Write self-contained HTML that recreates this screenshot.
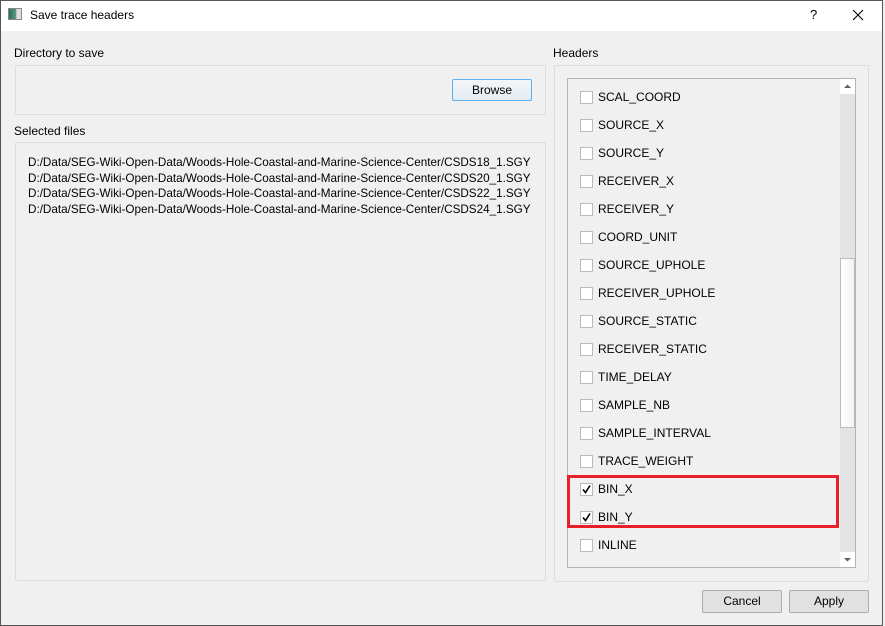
<!DOCTYPE html>
<html><head><style>
*{box-sizing:border-box;margin:0;padding:0}
body{width:885px;height:626px;background:#f0f0f0;font-family:"Liberation Sans",sans-serif;font-size:12px;color:#000;position:relative;overflow:hidden}
.abs{position:absolute}
.title{left:0;top:0;width:883px;height:31px;background:#fff}
.frame{left:0;top:0;width:883px;height:626px;border:1px solid #555;pointer-events:none}
.grp{border:1px solid #dcdcdc;border-radius:2px}
.btn{border:1px solid #adadad;background:#e1e1e1;text-align:center;line-height:21px;border-radius:2px}
.row{position:absolute;left:12px;height:28px;width:260px}
.cb{position:absolute;left:0;top:0;width:13px;height:13px;border:1px solid #bbb;background:#fff}
.lbl{position:absolute;left:18px;top:-1px;font-size:12px;white-space:nowrap}
</style></head><body>
<div class="abs title">
  <div class="abs" style="left:8px;top:8px;width:14px;height:12px;border:1px solid #888;background:linear-gradient(90deg,#2f6b5a 0,#5a9a8a 60%,#ddd 61%)"></div>
  <div class="abs" style="left:30px;top:8px;font-size:12px">Save trace headers</div>
  <div class="abs" style="left:810px;top:7px;font-size:13px">?</div>
  <svg class="abs" style="left:852px;top:9px" width="12" height="12"><path d="M1 1L11 11M11 1L1 11" stroke="#000" stroke-width="1.1"/></svg>
</div>
<div class="abs" style="left:14px;top:46px">Directory to save</div>
<div class="abs grp" style="left:15px;top:65px;width:531px;height:50px"></div>
<div class="abs btn" style="left:452px;top:79px;width:80px;height:22px;border-color:#5fb0f0;background:linear-gradient(#f3f6f9,#e4ecf3);line-height:20px">Browse</div>
<div class="abs" style="left:14px;top:124px">Selected files</div>
<div class="abs grp" style="left:15px;top:142px;width:531px;height:439px"></div>
<div class="abs" style="left:28px;top:155px;line-height:15.6px;font-size:11.7px;white-space:nowrap">D:/Data/SEG-Wiki-Open-Data/Woods-Hole-Coastal-and-Marine-Science-Center/CSDS18_1.SGY<br>D:/Data/SEG-Wiki-Open-Data/Woods-Hole-Coastal-and-Marine-Science-Center/CSDS20_1.SGY<br>D:/Data/SEG-Wiki-Open-Data/Woods-Hole-Coastal-and-Marine-Science-Center/CSDS22_1.SGY<br>D:/Data/SEG-Wiki-Open-Data/Woods-Hole-Coastal-and-Marine-Science-Center/CSDS24_1.SGY</div>
<div class="abs" style="left:553px;top:46px">Headers</div>
<div class="abs grp" style="left:554px;top:65px;width:315px;height:517px"></div>
<div class="abs" style="left:567px;top:78px;width:289px;height:490px;border:1px solid #b4b4b4;overflow:hidden">
  <div class="abs" style="left:0;top:0;width:273px;height:488px">
    <div class="row" style="top:12px"><div class="cb"></div><div class="lbl">SCAL_COORD</div></div>
    <div class="row" style="top:40px"><div class="cb"></div><div class="lbl">SOURCE_X</div></div>
    <div class="row" style="top:68px"><div class="cb"></div><div class="lbl">SOURCE_Y</div></div>
    <div class="row" style="top:96px"><div class="cb"></div><div class="lbl">RECEIVER_X</div></div>
    <div class="row" style="top:124px"><div class="cb"></div><div class="lbl">RECEIVER_Y</div></div>
    <div class="row" style="top:152px"><div class="cb"></div><div class="lbl">COORD_UNIT</div></div>
    <div class="row" style="top:180px"><div class="cb"></div><div class="lbl">SOURCE_UPHOLE</div></div>
    <div class="row" style="top:208px"><div class="cb"></div><div class="lbl">RECEIVER_UPHOLE</div></div>
    <div class="row" style="top:236px"><div class="cb"></div><div class="lbl">SOURCE_STATIC</div></div>
    <div class="row" style="top:264px"><div class="cb"></div><div class="lbl">RECEIVER_STATIC</div></div>
    <div class="row" style="top:292px"><div class="cb"></div><div class="lbl">TIME_DELAY</div></div>
    <div class="row" style="top:320px"><div class="cb"></div><div class="lbl">SAMPLE_NB</div></div>
    <div class="row" style="top:348px"><div class="cb"></div><div class="lbl">SAMPLE_INTERVAL</div></div>
    <div class="row" style="top:376px"><div class="cb"></div><div class="lbl">TRACE_WEIGHT</div></div>
    <div class="row" style="top:404px"><div class="cb"><svg width="11" height="11" style="position:absolute;left:0;top:0"><path d="M2 5.5L4.5 8.5L9 1.5" stroke="#000" stroke-width="1.6" fill="none"/></svg></div><div class="lbl">BIN_X</div></div>
    <div class="row" style="top:432px"><div class="cb"><svg width="11" height="11" style="position:absolute;left:0;top:0"><path d="M2 5.5L4.5 8.5L9 1.5" stroke="#000" stroke-width="1.6" fill="none"/></svg></div><div class="lbl">BIN_Y</div></div>
    <div class="row" style="top:460px"><div class="cb"></div><div class="lbl">INLINE</div></div>
    <div class="row" style="top:488px"><div class="cb"></div></div>
  </div>
  <div class="abs" style="left:272px;top:0;width:15px;height:488px;background:#e3e3e3">
    <div class="abs" style="left:0;top:0;width:15px;height:15px;background:#fff"><svg width="15" height="15"><path d="M4 9L7.5 5.5L11 9Z" fill="#606060"/></svg></div>
    <div class="abs" style="left:0;top:179px;width:15px;height:170px;background:linear-gradient(90deg,#fff,#f2f2f2);border:1px solid #bcbcbc"></div>
    <div class="abs" style="left:0;top:473px;width:15px;height:15px;background:#fff"><svg width="15" height="15"><path d="M4 6L7.5 9.5L11 6Z" fill="#606060"/></svg></div>
  </div>
</div>
<div class="abs" style="left:567px;top:475px;width:272px;height:53px;border:3px solid #e8202a"></div>
<div class="abs btn" style="left:702px;top:590px;width:80px;height:23px">Cancel</div>
<div class="abs btn" style="left:789px;top:590px;width:80px;height:23px">Apply</div>
<div class="abs frame"></div>
</body></html>
